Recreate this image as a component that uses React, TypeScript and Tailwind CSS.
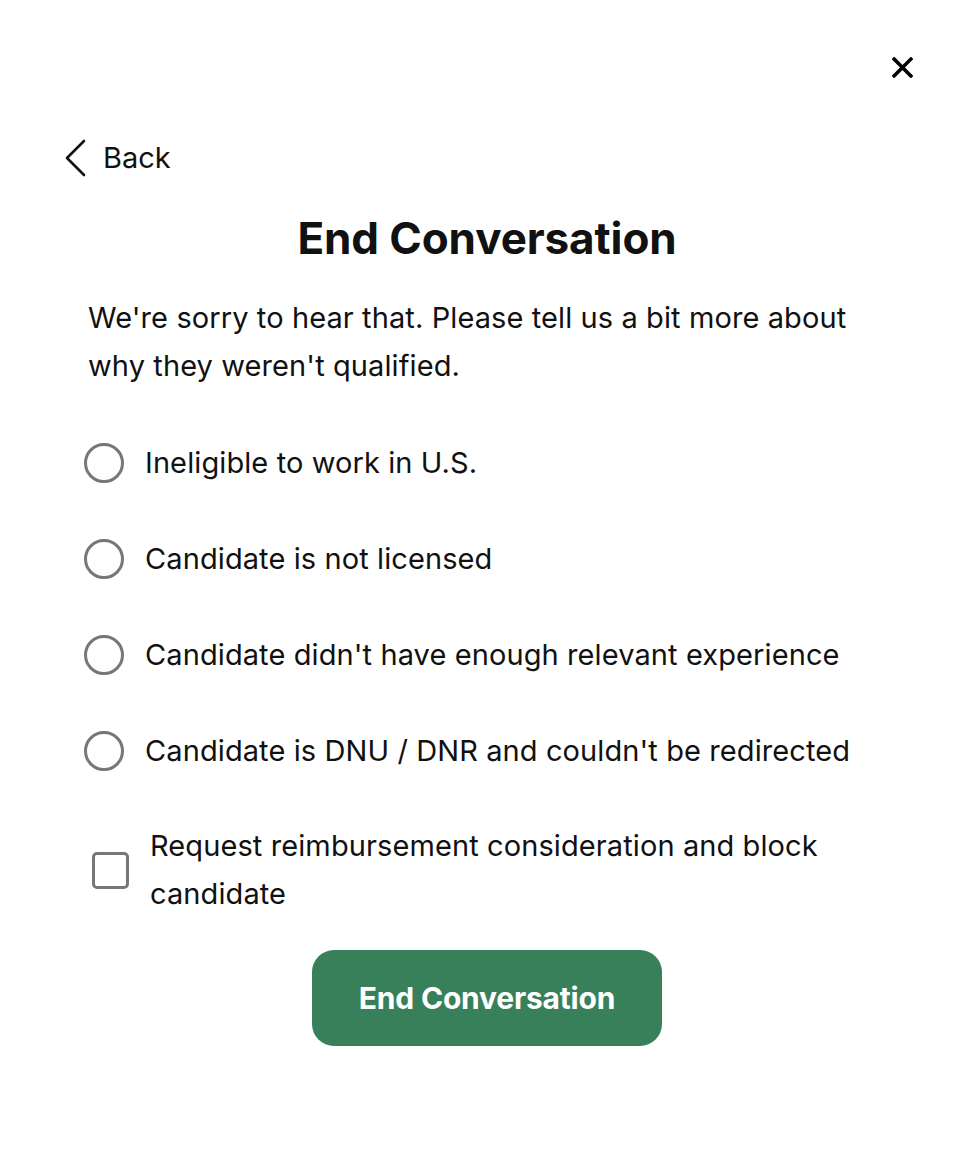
import React from 'react';

const reasons = [
  'Ineligible to work in U.S.',
  'Candidate is not licensed',
  "Candidate didn't have enough relevant experience",
  "Candidate is DNU / DNR and couldn't be redirected",
];

export default function App() {
  return (
    <div className="min-h-[1152px] w-full bg-white text-[#111] font-['Inter','Liberation_Sans',sans-serif]">
      <div className="flex justify-end pt-[57px] pr-[53px]">
        <button aria-label="Close" className="h-[21px] w-[21px]">
          <svg viewBox="0 0 20 20" className="h-[21px] w-[21px]" fill="none" stroke="#000" strokeWidth="3.4" strokeLinecap="square">
            <path d="M2 2L18 18M18 2L2 18" />
          </svg>
        </button>
      </div>

      <div className="mt-[61px] flex items-center pl-[64px]">
        <svg viewBox="0 0 22 38" className="h-[38px] w-[22px]" fill="none" stroke="#111" strokeWidth="2.6" strokeLinecap="round" strokeLinejoin="round">
          <path d="M20 2L3 19L20 36" />
        </svg>
        <span className="ml-[17px] text-[29px] leading-[36px]">Back</span>
      </div>

      <h1 className="mt-[33px] pl-[8px] text-center text-[44px] font-bold leading-[56px] tracking-[-0.1px]">End Conversation</h1>

      <p className="mt-[28px] pl-[88px] pr-[100px] text-[29px] leading-[48px] tracking-[0.1px]">
        We're sorry to hear that. Please tell us a bit more about why they weren't qualified.
      </p>

      <div className="mt-[53px] flex flex-col gap-[56px] pl-[84px]">
        {reasons.map((r) => (
          <label key={r} className="flex h-[40px] items-center">
            <span className="h-[40px] w-[40px] shrink-0 rounded-full border-[3px] border-[#777]" />
            <span className="ml-[21px] text-[29px] leading-[40px] tracking-[0.1px]">{r}</span>
          </label>
        ))}
      </div>

      <label className="mt-[51px] flex items-center pl-[92px] pr-[100px]">
        <span className="h-[37px] w-[37px] shrink-0 rounded-[5px] border-[3px] border-[#777]" />
        <span className="ml-[21px] text-[29px] leading-[48px] tracking-[0.1px]">
          Request reimbursement consideration and block candidate
        </span>
      </label>

      <div className="mt-[32px] flex justify-center pl-[8px]">
        <button className="h-[96px] w-[350px] rounded-[22px] bg-[#37805a] text-[30px] font-bold tracking-[-0.2px] text-white">
          End Conversation
        </button>
      </div>
    </div>
  );
}
